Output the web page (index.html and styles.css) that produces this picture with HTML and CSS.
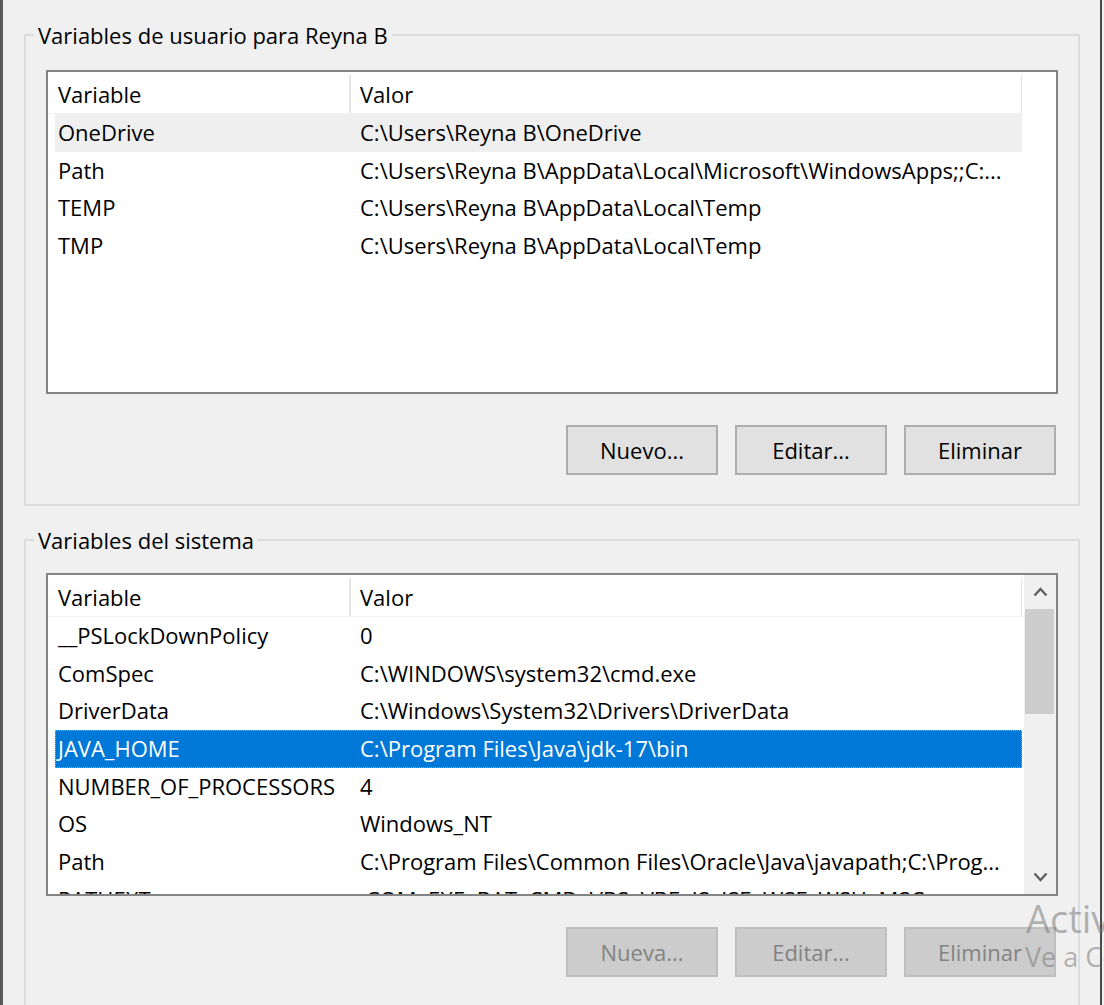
FILE: index.html
```html
<!DOCTYPE html>
<html lang="es">
<head>
<meta charset="utf-8">
<title>Variables de entorno</title>
<link rel="stylesheet" href="styles.css">
</head>
<body>
<div class="window">
  <fieldset class="group group-user">
    <legend>Variables de usuario para Reyna B</legend>
    <div class="list list-user">
      <div class="list-body">
        <div class="header"><div class="hcell c1">Variable</div><div class="hcell c2">Valor</div></div>
        <div class="row hover"><div class="cell c1">OneDrive</div><div class="cell c2">C:\Users\Reyna B\OneDrive</div></div>
        <div class="row"><div class="cell c1">Path</div><div class="cell c2">C:\Users\Reyna B\AppData\Local\Microsoft\WindowsApps;;C:...</div></div>
        <div class="row"><div class="cell c1">TEMP</div><div class="cell c2">C:\Users\Reyna B\AppData\Local\Temp</div></div>
        <div class="row"><div class="cell c1">TMP</div><div class="cell c2">C:\Users\Reyna B\AppData\Local\Temp</div></div>
      </div>
    </div>
    <div class="buttons">
      <button class="btn" type="button">Nuevo...</button>
      <button class="btn" type="button">Editar...</button>
      <button class="btn" type="button">Eliminar</button>
    </div>
  </fieldset>

  <fieldset class="group group-sys">
    <legend>Variables del sistema</legend>
    <div class="list list-sys">
      <div class="list-body">
        <div class="header"><div class="hcell c1">Variable</div><div class="hcell c2">Valor</div></div>
        <div class="row"><div class="cell c1">__PSLockDownPolicy</div><div class="cell c2">0</div></div>
        <div class="row"><div class="cell c1">ComSpec</div><div class="cell c2">C:\WINDOWS\system32\cmd.exe</div></div>
        <div class="row"><div class="cell c1">DriverData</div><div class="cell c2">C:\Windows\System32\Drivers\DriverData</div></div>
        <div class="row selected"><div class="cell c1">JAVA_HOME</div><div class="cell c2">C:\Program Files\Java\jdk-17\bin</div></div>
        <div class="row"><div class="cell c1">NUMBER_OF_PROCESSORS</div><div class="cell c2">4</div></div>
        <div class="row"><div class="cell c1">OS</div><div class="cell c2">Windows_NT</div></div>
        <div class="row"><div class="cell c1">Path</div><div class="cell c2">C:\Program Files\Common Files\Oracle\Java\javapath;C:\Prog...</div></div>
        <div class="row"><div class="cell c1">PATHEXT</div><div class="cell c2">.COM;.EXE;.BAT;.CMD;.VBS;.VBE;.JS;.JSE;.WSF;.WSH;.MSC</div></div>
      </div>
      <div class="scrollbar">
        <div class="sb-btn">
          <svg width="15" height="10" viewBox="0 0 15 10"><polyline points="1.5,8.5 7.5,2 13.5,8.5" fill="none" stroke="#606060" stroke-width="2.4"/></svg>
        </div>
        <div class="sb-thumb"></div>
        <div class="sb-track"></div>
        <div class="sb-btn">
          <svg width="15" height="10" viewBox="0 0 15 10"><polyline points="1.5,1.5 7.5,8 13.5,1.5" fill="none" stroke="#606060" stroke-width="2.4"/></svg>
        </div>
      </div>
    </div>
    <div class="buttons">
      <button class="btn disabled" type="button">Nueva...</button>
      <button class="btn disabled" type="button">Editar...</button>
      <button class="btn disabled" type="button">Eliminar</button>
    </div>
  </fieldset>
</div>
<div class="watermark">
  <div class="wm-title">Activar Windows</div>
  <div class="wm-sub">Ve a Configuración para activar Windows.</div>
</div>
</body>
</html>
```
FILE: styles.css
```css
html, body {
  margin: 0;
  padding: 0;
}

body {
  position: relative;
  width: 1104px;
  height: 1005px;
  overflow: hidden;
  background: #f0f0f0;
  font-family: "Open Sans", "Noto Sans", sans-serif;
  font-size: 22px;
  color: #000;
}

.window {
  box-sizing: border-box;
  width: 1102px;
  height: 1005px;
  border-left: 3px solid #5a5a5a;
  border-right: 2px solid #4a4a4a;
  padding: 21px 0 0 21px;
}

.group {
  box-sizing: border-box;
  width: 1056px;
  min-inline-size: 0;
  margin: 0;
  border: 2px solid #dcdcdc;
}

.group-user {
  padding: 21px 20px 29px 20px;
}

.group-sys {
  margin-top: 20px;
  padding: 19px 20px 40px 20px;
}

.group legend {
  margin-left: -12px;
  padding: 0 4px;
  line-height: 28px;
}

.list {
  box-sizing: border-box;
  display: flex;
  width: 1012px;
  border: 2px solid #848484;
  background: #fff;
  overflow: hidden;
}

.list-user {
  height: 324px;
}

.list-sys {
  height: 323px;
}

.list-body {
  width: 976px;
  flex: none;
}

.header {
  display: flex;
  height: 42px;
  box-sizing: border-box;
  padding-top: 3px;
  line-height: 39px;
  border-bottom: 1px solid #f3f3f3;
}

.hcell {
  box-sizing: border-box;
  white-space: nowrap;
}

.hcell.c1 {
  width: 303px;
  padding-left: 10px;
  border-right: 2px solid #e5e5e5;
}

.hcell.c2 {
  width: 671px;
  padding-left: 9px;
  border-right: 1px solid #e5e5e5;
}

.row {
  display: flex;
  width: 967px;
  margin-left: 7px;
  height: 37.67px;
  line-height: 37.67px;
  box-sizing: border-box;
}

.row.hover {
  background: #efefef;
}

.row.selected {
  background: #0078d7;
  color: #fff;
  outline: 1px dotted #e29a4e;
  outline-offset: -1px;
}

.cell {
  box-sizing: border-box;
  white-space: nowrap;
  overflow: hidden;
}

.cell.c1 {
  width: 295px;
  padding-left: 3px;
}

.cell.c2 {
  width: 672px;
  padding-left: 10px;
}

.scrollbar {
  display: flex;
  flex-direction: column;
  width: 32px;
  background: #f0f0f0;
}

.sb-btn {
  display: flex;
  align-items: center;
  justify-content: center;
  height: 34px;
  flex: none;
}

.sb-thumb {
  height: 105px;
  margin: 0 2px 0 1px;
  background: #cdcdcd;
  flex: none;
}

.sb-track {
  flex: 1;
}

.buttons {
  display: flex;
  justify-content: flex-end;
  gap: 17px;
  margin-top: 31px;
  padding-right: 2px;
}

.btn {
  box-sizing: border-box;
  width: 152px;
  height: 50px;
  margin: 0;
  padding: 0;
  border: 2px solid #adadad;
  background: #e1e1e1;
  font: inherit;
  color: #000;
}

.btn.disabled {
  background: #cccccc;
  border-color: #bfbfbf;
  color: #838383;
}

.watermark {
  position: absolute;
  left: 1026px;
  top: 893px;
  color: rgba(120, 120, 120, 0.55);
  white-space: nowrap;
}

.wm-title {
  font-size: 38px;
  line-height: 50px;
}

.wm-sub {
  font-size: 27px;
  line-height: 28px;
  margin-left: -1px;
}
```
